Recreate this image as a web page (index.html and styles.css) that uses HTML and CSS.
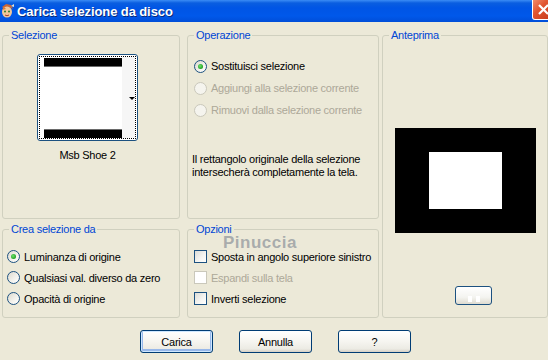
FILE: index.html
```html
<!DOCTYPE html>
<html lang="it">
<head>
    <meta charset="UTF-8">
    <title>Carica selezione da disco</title>
    <link rel="stylesheet" href="styles.css">
</head>
<body>
<div class="window">
    <div class="titlebar">
        <svg class="app-icon" width="15" height="16" viewBox="0 0 15 16">
            <path d="M2 4 L6 1 L11 2 L13 6 L11 5 L8 4 L4 6 Z" fill="#c8663a"/>
            <ellipse cx="7" cy="9" rx="5" ry="5.5" fill="#f2c79a"/>
            <path d="M2 7 L4 4 L6 6 Z" fill="#e07830"/>
            <circle cx="5" cy="8.5" r="1" fill="#2c7d2c"/>
            <circle cx="9" cy="8.5" r="1" fill="#2c7d2c"/>
            <path d="M5 12 Q7 13.5 9 12" stroke="#a0402a" stroke-width="1" fill="none"/>
            <path d="M11 3 L14 1 L14 4 Z" fill="#e8e4d0"/>
        </svg>
        <span class="title">Carica selezione da disco</span>
        <div class="close">
            <svg width="21" height="19" viewBox="0 0 21 19">
                <path d="M6 5 L15 14 M15 5 L6 14" stroke="#fff" stroke-width="2.2"/>
            </svg>
        </div>
    </div>

    <div class="content">
        <div class="panels">
            <fieldset class="group g-sel">
                <legend>Selezione</legend>
                <div class="thumb-wrap">
                    <div class="thumb">
                        <div class="thumb-focus">
                            <div class="thumb-pic">
                                <div class="bar bar-top"></div>
                                <div class="bar bar-bottom"></div>
                            </div>
                            <div class="thumb-side"><span class="arrow"></span></div>
                        </div>
                    </div>
                    <div class="thumb-name">Msb Shoe 2</div>
                </div>
            </fieldset>

            <fieldset class="group g-op">
                <legend>Operazione</legend>
                <div class="opt"><span class="radio checked"></span>Sostituisci selezione</div>
                <div class="opt disabled"><span class="radio"></span>Aggiungi alla selezione corrente</div>
                <div class="opt disabled"><span class="radio"></span>Rimuovi dalla selezione corrente</div>
                <p class="note">Il rettangolo originale della selezione<br>intersecherà completamente la tela.</p>
            </fieldset>

            <fieldset class="group g-prev">
                <legend>Anteprima</legend>
                <div class="preview"><div class="preview-sel"></div></div>
                <div class="small-btn"><span class="dots"></span></div>
            </fieldset>

            <fieldset class="group g-from">
                <legend>Crea selezione da</legend>
                <div class="opt"><span class="radio checked"></span>Luminanza di origine</div>
                <div class="opt"><span class="radio"></span>Qualsiasi val. diverso da zero</div>
                <div class="opt"><span class="radio"></span>Opacità di origine</div>
            </fieldset>

            <fieldset class="group g-opts">
                <legend>Opzioni</legend>
                <div class="opt"><span class="check"></span>Sposta in angolo superiore sinistro</div>
                <div class="opt disabled"><span class="check"></span>Espandi sulla tela</div>
                <div class="opt"><span class="check"></span>Inverti selezione</div>
                <div class="watermark">Pinuccia</div>
            </fieldset>
        </div>

        <div class="buttons">
            <div class="btn default">Carica</div>
            <div class="btn">Annulla</div>
            <div class="btn">?</div>
        </div>
    </div>
</div>
</body>
</html>
```

FILE: styles.css
```css
* {
    box-sizing: border-box;
}

html, body {
    margin: 0;
    padding: 0;
}

body {
    width: 548px;
    height: 360px;
    overflow: hidden;
    background-color: #ece9d8;
    font-family: "Liberation Sans", Arial, sans-serif;
    font-size: 11px;
    letter-spacing: -0.25px;
    color: #000000;
}

.window {
    height: 100%;
}

/* title bar */

.titlebar {
    height: 22px;
    display: flex;
    align-items: center;
    background: linear-gradient(#3b8cf5 0px, #0a5ee0 3px, #0055e5 8px, #0058ea 16px, #004ed8 22px);
    position: relative;
}

.app-icon {
    margin: 0 2px 0 0;
    flex-shrink: 0;
}

.title {
    font-weight: bold;
    font-size: 13px;
    color: #ffffff;
    text-shadow: 1px 1px 0 #0a2a7a;
    letter-spacing: -0.1px;
}

.close {
    position: absolute;
    left: 532px;
    top: 0;
    width: 21px;
    height: 20px;
    border: 1px solid #ffffff;
    border-top: none;
    border-radius: 0 0 0 3px;
    background: linear-gradient(135deg, #f08a6a 0%, #e15530 40%, #c5391a 100%);
}

.close svg {
    display: block;
}

/* body */

.content {
    padding: 7px 0 0 2px;
}

.panels {
    display: grid;
    grid-template-columns: 178px 7px 192px 3px 166px;
    grid-template-rows: 190px 95px;
    row-gap: 4px;
}

.group {
    margin: 0;
    padding: 0;
    min-width: 0;
    border: 1px solid #d0d0bf;
    border-radius: 3px;
    position: relative;
}

.group legend {
    color: #0046d5;
    line-height: 13px;
    padding: 0 2px;
    margin-left: 6px;
}

.g-sel {
    grid-column: 1;
    grid-row: 1;
    padding-top: 12px;
}

.g-op {
    grid-column: 3;
    grid-row: 1;
    padding-top: 13px;
}

.g-prev {
    grid-column: 5;
    grid-row: 1 / span 2;
    padding-top: 86px;
}

.g-from {
    grid-column: 1;
    grid-row: 2;
    padding-top: 10px;
}

.g-opts {
    grid-column: 3;
    grid-row: 2;
    padding-top: 10px;
}

/* thumbnail */

.thumb-wrap {
    display: inline-flex;
    flex-direction: column;
    align-items: center;
    margin-left: 34px;
}

.thumb {
    width: 101px;
    height: 87px;
    border: 1px solid #1c5180;
    border-radius: 3px;
    background-color: #ffffff;
    padding: 1px;
}

.thumb-focus {
    height: 100%;
    border: 1px dotted #000000;
    display: flex;
    padding: 0 0 0 4px;
}

.thumb-pic {
    width: 78px;
    display: flex;
    flex-direction: column;
    justify-content: space-between;
}

.bar {
    height: 9px;
    background-color: #000000;
}

.bar-top {
    margin-top: 1px;
    border-bottom: 1px solid #6a6a6a;
}

.bar-bottom {
    border-top: 1px solid #6a6a6a;
}

.thumb-side {
    flex: 1;
    background-color: #f6f6f6;
    display: flex;
    align-items: center;
    justify-content: flex-end;
}

.arrow {
    width: 0;
    height: 0;
    border-left: 3px solid transparent;
    border-right: 3px solid transparent;
    border-top: 3px solid #000000;
    margin-top: 2px;
}

.thumb-name {
    margin-top: 8px;
    line-height: 13px;
}

/* radio and check rows */

.opt {
    display: flex;
    align-items: center;
    gap: 4px;
    height: 21px;
    padding-left: 4px;
    white-space: nowrap;
}

.g-op .opt {
    height: 22px;
    padding-left: 6px;
}

.g-opts .opt {
    padding-left: 6px;
}

.opt.disabled {
    color: #aca899;
}

.radio {
    width: 13px;
    height: 13px;
    flex-shrink: 0;
    border-radius: 50%;
    border: 1px solid #1c5180;
    background: linear-gradient(135deg, #dcd9ce 0%, #f4f3ee 60%, #ffffff 100%);
    display: flex;
    align-items: center;
    justify-content: center;
}

.radio.checked::after {
    content: "";
    width: 5px;
    height: 5px;
    border-radius: 50%;
    background: radial-gradient(circle at 40% 40%, #6ee16e 0%, #21a121 70%);
}

.disabled .radio {
    border-color: #cac8bb;
    background: #f5f4ee;
}

.check {
    width: 13px;
    height: 13px;
    flex-shrink: 0;
    border: 1px solid #1c5180;
    background: linear-gradient(135deg, #dcdcd7 0%, #f5f5f2 60%, #ffffff 100%);
}

.disabled .check {
    border-color: #cac8bb;
    background: #ffffff;
}

.note {
    margin: 32px 0 0 4px;
    line-height: 13px;
}

/* preview */

.preview {
    width: 141px;
    height: 105px;
    margin: 0 auto;
    background-color: #000000;
    padding: 24px 0 0 34px;
}

.preview-sel {
    width: 73px;
    height: 57px;
    background-color: #ffffff;
}

.small-btn {
    width: 37px;
    height: 19px;
    margin: 53px 0 0 72px;
    border: 1px solid #1c5180;
    border-radius: 3px;
    background: linear-gradient(#ffffff 0%, #f4f4f0 60%, #dedbd0 100%);
    display: flex;
    align-items: flex-end;
    justify-content: center;
    padding-bottom: 2px;
}

.dots {
    width: 12px;
    height: 6px;
    background: linear-gradient(90deg, #ffffff 0 4px, transparent 4px 8px, #ffffff 8px 12px);
}

/* watermark */

.watermark {
    position: absolute;
    left: 35px;
    top: 0;
    line-height: 13px;
    font-size: 17px;
    font-weight: bold;
    letter-spacing: 0.5px;
    color: rgba(110, 120, 135, 0.55);
}

/* dialog buttons */

.buttons {
    display: flex;
    gap: 26px;
    margin: 12px 0 0 138px;
}

.btn {
    width: 73px;
    height: 23px;
    border: 1px solid #003c74;
    border-radius: 3px;
    background: linear-gradient(#ffffff 0%, #f6f5f0 50%, #ecebe4 85%, #d6d0c5 100%);
    display: flex;
    align-items: center;
    justify-content: center;
}

.btn.default {
    box-shadow: inset 0 0 0 1px #cee7ff, inset 0 -1px 0 2px #98b8ea;
}
```
